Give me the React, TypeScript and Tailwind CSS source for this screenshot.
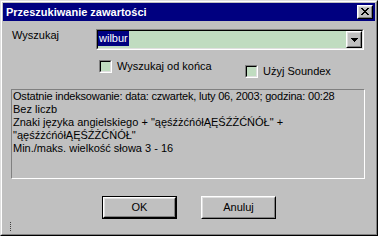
import React from "react";

const font = { fontFamily: '"Liberation Sans", Arial, sans-serif' };

function Sunken2({ className = "", children }: { className?: string; children?: React.ReactNode }) {
  return (
    <div className={`border border-t-[#808080] border-l-[#808080] border-r-white border-b-white ${className}`}>
      <div className="h-full w-full border border-t-black border-l-black border-r-[#dfdfdf] border-b-[#dfdfdf] bg-[#c0dcc0]">
        {children}
      </div>
    </div>
  );
}

function Raised({ className = "", children }: { className?: string; children?: React.ReactNode }) {
  return (
    <div className={`border border-t-white border-l-white border-r-black border-b-black bg-[#c0c0c0] ${className}`}>
      <div className="h-full w-full border border-t-[#dfdfdf] border-l-[#dfdfdf] border-r-[#808080] border-b-[#808080] flex items-center justify-center">
        {children}
      </div>
    </div>
  );
}

function CloseGlyph() {
  const rows = ["##....##", ".##..##.", "..####..", "...##...", "..####..", ".##..##.", "##....##"];
  return (
    <svg width="8" height="7" viewBox="0 0 8 7" shapeRendering="crispEdges">
      {rows.flatMap((r, y) =>
        r.split("").map((c, x) => (c === "#" ? <rect key={`${x}-${y}`} x={x} y={y} width="1" height="1" fill="black" /> : null))
      )}
    </svg>
  );
}

function ArrowGlyph() {
  return (
    <svg width="7" height="4" viewBox="0 0 7 4" shapeRendering="crispEdges">
      <rect x="0" y="0" width="7" height="1" fill="black" />
      <rect x="1" y="1" width="5" height="1" fill="black" />
      <rect x="2" y="2" width="3" height="1" fill="black" />
      <rect x="3" y="3" width="1" height="1" fill="black" />
    </svg>
  );
}

function Checkbox() {
  return <Sunken2 className="w-[13px] h-[13px] shrink-0" />;
}

export default function App() {
  return (
    <div style={font} className="w-[378px] h-[236px] bg-[#c0c0c0] text-[11px] leading-[13px] text-black border border-t-[#dfdfdf] border-l-[#dfdfdf] border-r-black border-b-black">
      <div className="h-full border border-t-white border-l-white border-r-[#808080] border-b-[#808080] p-px flex flex-col">
        {/* Title bar */}
        <div className="h-[18px] bg-[#000080] flex items-center justify-between pl-[3px] pr-[2px] shrink-0">
          <span className="text-white font-bold text-[11px]">Przeszukiwanie zawartości</span>
          <Raised className="w-[16px] h-[14px]">
            <div className="pb-px">
              <CloseGlyph />
            </div>
          </Raised>
        </div>

        {/* Search row */}
        <div className="mt-[8px] flex items-start">
          <div className="w-[93px] pl-[9px] pt-0">Wyszukaj</div>
          <Sunken2 className="w-[268px] h-[21px]">
            <div className="flex h-full">
              <div className="flex-1 flex items-start">
                <span className="bg-[#000080] text-white leading-[15px] pl-px pr-px">wilbur</span>
              </div>
              <Raised className="w-[16px] h-full">
                <ArrowGlyph />
              </Raised>
            </div>
          </Sunken2>
        </div>

        {/* Checkbox row */}
        <div className="mt-[10px] h-[29px] flex items-start pl-[96px]">
          <div className="w-[146px] flex items-start gap-[5px]">
            <Checkbox />
            <span>Wyszukaj od końca</span>
          </div>
          <div className="mt-[5px] flex items-start gap-[5px]">
            <Checkbox />
            <span>Użyj Soundex</span>
          </div>
        </div>

        {/* Info box */}
        <div className="ml-[8px] w-[354px] h-[90px] border border-t-[#808080] border-l-[#808080] border-r-white border-b-white pl-px">
          <div className="tracking-[-0.2px]">Ostatnie indeksowanie: data: czwartek, luty 06, 2003; godzina: 00:28</div>
          <div>Bez liczb</div>
          <div>Znaki języka angielskiego + "ąęśźżćńółĄĘŚŹŻĆŃÓŁ" +</div>
          <div>"ąęśźżćńółĄĘŚŹŻĆŃÓŁ"</div>
          <div>Min./maks. wielkość słowa 3 - 16</div>
        </div>

        {/* Buttons */}
        <div className="mt-[17px] flex pl-[99px] gap-[24px]">
          <div className="w-[75px] h-[23px] border border-black">
            <Raised className="w-full h-full">OK</Raised>
          </div>
          <Raised className="w-[75px] h-[23px]">Anuluj</Raised>
        </div>

        {/* grip dots */}
        <div className="mt-[3px] ml-[7px] flex flex-col gap-px">
          <div className="w-px h-px bg-[#404040]" />
          <div className="w-px h-px bg-[#404040]" />
          <div className="w-px h-px bg-[#404040]" />
          <div className="w-px h-px bg-[#404040]" />
          <div className="w-px h-px bg-[#404040]" />
        </div>
      </div>
    </div>
  );
}
